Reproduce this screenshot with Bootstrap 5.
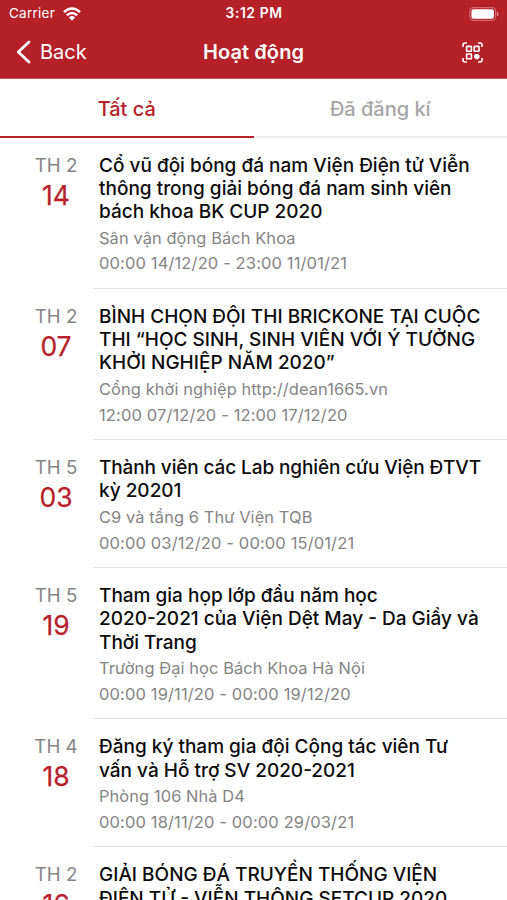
<!DOCTYPE html>
<html lang="vi">
<head>
<meta charset="utf-8">
<meta name="viewport" content="width=device-width, initial-scale=1">
<title>Hoạt động</title>
<link href="https://cdn.jsdelivr.net/npm/bootstrap@5.3.0/dist/css/bootstrap.min.css" rel="stylesheet">
<style>
body{font-family:Inter,"Liberation Sans",sans-serif;height:900px;overflow:hidden;background:#fff;color:#0c0c0c}
.app-header{background:#b62029;height:79px;flex:none;border-bottom:1px solid #cb5a61;color:#fff}
.status-row{height:27px;font-size:13.5px;letter-spacing:.25px;padding:0 8px 0 9px}
.status-time{font-size:13.8px;letter-spacing:.6px}
.title-row{height:50px;padding:0 16px}
.side{flex:1 1 0}
.back-label{font-size:20px;letter-spacing:0;margin-left:9px;line-height:24px}
.screen-title{font-size:20px;letter-spacing:.1px;line-height:24px}
.tab-strip{height:59px;flex:none;font-size:20px}
.tab-strip .nav-link{color:#a6a6a6;height:59px;padding:1px 0 0;line-height:59px;border-bottom:2px solid #ededed;border-radius:0;font-weight:500;letter-spacing:-.02px}
.tab-strip .nav-link.active{color:#b62029;border-color:#b62029}
.event-list{margin-top:-.6px}
.event{height:151.3px;padding-top:16.1px}
.event.two-line{height:128px}
.event-day{width:93px;flex:none;padding-left:19px;color:#858585;font-size:18.7px;line-height:23px}
.event-day strong{display:block;font-weight:400;font-size:26.5px;line-height:30px;color:#b8202b;margin-top:3px;-webkit-text-stroke:.25px #b8202b}
.event-body{border-bottom:1px solid #e5e5e5;margin-top:-16.1px;padding:16.1px 0 0 6px;white-space:nowrap;min-width:0}
.event-title{font-size:19px;line-height:23.35px;font-weight:500;margin:0 0 2.2px}
.event-title .snug{letter-spacing:-.12px}
.event-meta{font-size:16.4px;line-height:25.6px;color:#848484;margin:0;letter-spacing:.1px}
.event-time{font-size:16.5px;letter-spacing:.13px}
</style>
<script src="https://cdn.jsdelivr.net/npm/bootstrap@5.3.0/dist/js/bootstrap.bundle.min.js"></script>
</head>
<body class="d-flex flex-column">
<header class="app-header">
  <div class="status-row d-flex align-items-center">
    <div class="side d-flex align-items-center"><span>Carrier</span>
      <svg class="ms-2" width="18" height="14" viewBox="0 0 18 14" fill="none" stroke="#fff" stroke-width="2.5"><path d="M.9 5.1Q9-2 17.1 5.1M3.8 8.2Q9 3.8 14.2 8.2"/><path d="M5.9 10.4Q9 7.7 12.1 10.4L9 13.7Z" fill="#fff" stroke="none"/></svg>
    </div>
    <span class="status-time fw-semibold">3:12 PM</span>
    <div class="side d-flex justify-content-end">
      <svg width="30" height="14" viewBox="0 0 30 14"><rect x=".7" y=".7" width="26" height="12.6" rx="3.6" fill="none" stroke="#cf6a70" stroke-width="1.2"/><rect x="2.4" y="2.3" width="22.6" height="9.4" rx="2.2" fill="#fff"/><path d="M28 4.8v4.4q1.6-.7 1.6-2.2T28 4.8Z" fill="#dc8f94"/></svg>
    </div>
  </div>
  <div class="title-row d-flex align-items-center">
    <div class="side d-flex align-items-center"><svg width="15" height="24" viewBox="0 0 15 24" fill="none" stroke="#fff" stroke-width="2.8" stroke-linecap="round" stroke-linejoin="round"><path d="M13 2 2.3 12 13 22"/></svg><span class="back-label">Back</span></div>
    <h1 class="screen-title fw-semibold m-0">Hoạt động</h1>
    <div class="side d-flex justify-content-end">
      <svg class="me-2" width="21" height="21" viewBox="0 0 21 21" fill="none" stroke="#fff" stroke-width="1.6"><path d="M1 5V3q0-2 2-2h2M16 1h2q2 0 2 2v2M1 16v2q0 2 2 2h2M16 20h2q2 0 2-2v-2"/><rect x="4.6" y="4.4" width="4.8" height="4.8" rx=".4"/><rect x="12.2" y="4.4" width="4.8" height="4.8" rx=".4"/><rect x="4.6" y="12" width="4.8" height="4.8" rx=".4"/><path d="M12.9 12h3.6v1.1h1v2.9h-1v1.2h-3.2v-1.1h-1.2v-3h.8Z" fill="#fff" stroke="none"/></svg>
    </div>
  </div>
</header>
<nav class="nav nav-justified tab-strip flex-nowrap">
  <a class="nav-link active w-50" href="#">Tất cả</a><a class="nav-link w-50" href="#">Đã đăng kí</a>
</nav>
<main class="event-list flex-fill overflow-hidden">
  <article class="event d-flex"><div class="event-day text-center">TH 2<strong>14</strong></div><div class="event-body flex-fill">
    <h2 class="event-title">Cổ vũ đội bóng đá nam Viện Điện tử Viễn<br>thông trong giải bóng đá nam sinh viên<br>bách khoa BK CUP 2020</h2>
    <p class="event-meta">Sân vận động Bách Khoa</p><p class="event-meta event-time">00:00 14/12/20 - 23:00 11/01/21</p></div></article>
  <article class="event d-flex"><div class="event-day text-center">TH 2<strong>07</strong></div><div class="event-body flex-fill">
    <h2 class="event-title">BÌNH CHỌN ĐỘI THI BRICKONE TẠI CUỘC<br>THI “HỌC SINH, SINH VIÊN VỚI Ý TƯỞNG<br>KHỞI NGHIỆP NĂM 2020”</h2>
    <p class="event-meta">Cổng khởi nghiệp http://dean1665.vn</p><p class="event-meta event-time">12:00 07/12/20 - 12:00 17/12/20</p></div></article>
  <article class="event two-line d-flex"><div class="event-day text-center">TH 5<strong>03</strong></div><div class="event-body flex-fill">
    <h2 class="event-title"><span class="snug">Thành viên các Lab nghiên cứu Viện ĐTVT</span><br>kỳ 20201</h2>
    <p class="event-meta">C9 và tầng 6 Thư Viện TQB</p><p class="event-meta event-time">00:00 03/12/20 - 00:00 15/01/21</p></div></article>
  <article class="event d-flex"><div class="event-day text-center">TH 5<strong>19</strong></div><div class="event-body flex-fill">
    <h2 class="event-title">Tham gia họp lớp đầu năm học<br>2020-2021 của Viện Dệt May - Da Giầy và<br>Thời Trang</h2>
    <p class="event-meta">Trường Đại học Bách Khoa Hà Nội</p><p class="event-meta event-time">00:00 19/11/20 - 00:00 19/12/20</p></div></article>
  <article class="event two-line d-flex"><div class="event-day text-center">TH 4<strong>18</strong></div><div class="event-body flex-fill">
    <h2 class="event-title">Đăng ký tham gia đội Cộng tác viên Tư<br>vấn và Hỗ trợ SV 2020-2021</h2>
    <p class="event-meta">Phòng 106 Nhà D4</p><p class="event-meta event-time">00:00 18/11/20 - 00:00 29/03/21</p></div></article>
  <article class="event d-flex"><div class="event-day text-center">TH 2<strong>16</strong></div><div class="event-body flex-fill">
    <h2 class="event-title">GIẢI BÓNG ĐÁ TRUYỀN THỐNG VIỆN<br>ĐIỆN TỬ - VIỄN THÔNG SETCUP 2020</h2></div></article>
</main>
</body>
</html>
